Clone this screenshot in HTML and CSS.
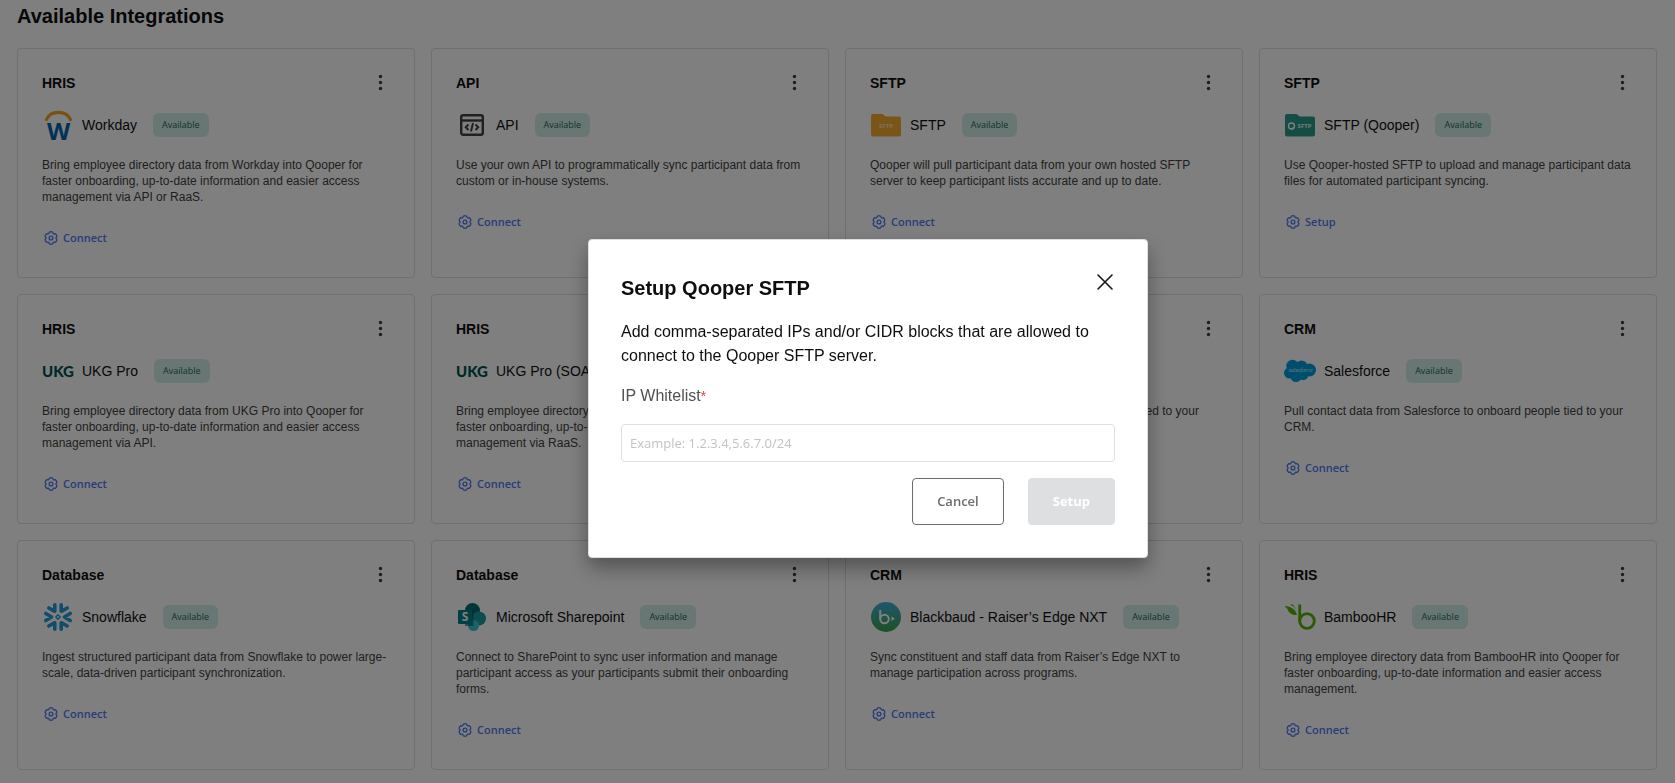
FILE: index.html
```html
<!DOCTYPE html>
<html lang="en">
<head>
<meta charset="utf-8">
<meta name="viewport" content="width=device-width, initial-scale=1">
<title>Available Integrations</title>
<link rel="stylesheet" href="styles.css">
</head>
<body>
<svg class="sprite" aria-hidden="true">
  <symbol id="gear" viewBox="0 0 14 14">
    <path d="M5.500 1Q7 .5 8.500 1L9.400 2.800 11.400 2.700Q12.600 3.700 12.900 5.300L11.800 7 12.900 8.700Q12.600 10.300 11.400 11.300L9.400 11.200 8.500 13Q7 13.500 5.500 13L4.600 11.200 2.600 11.300Q1.400 10.300 1.100 8.700L2.200 7 1.100 5.300Q1.400 3.700 2.600 2.700L4.600 2.800Z" fill="none" stroke="currentColor" stroke-width="1.300" stroke-linejoin="round"/>
    <circle cx="7" cy="7" r="1.900" fill="none" stroke="currentColor" stroke-width="1.300"/>
  </symbol>
  <symbol id="kebab" viewBox="0 0 20 20">
    <circle cx="10.500" cy="3.500" r="1.700"/><circle cx="10.500" cy="9.500" r="1.700"/><circle cx="10.500" cy="15.500" r="1.700"/>
  </symbol>
</svg>

<main class="page">
  <h1 class="page-title">Available Integrations</h1>
  <div class="grid">
    <article class="card">
      <header class="card-head"><h2 class="card-type">HRIS</h2><button class="menu" aria-label="More options"><svg><use href="#kebab"/></svg></button></header>
      <div class="card-name">
        <svg class="logo" viewBox="0 0 32 32"><path d="M4.500 10.500C8.500 1 24 1 28.500 10.500" fill="none" stroke="#f5a01e" stroke-width="3.200" stroke-linecap="round"/><text class="logo-text" x="16.500" y="31" font-size="24" text-anchor="middle" fill="#0064ab">W</text></svg>
        <span>Workday</span><span class="badge">Available</span>
      </div>
      <p class="desc">Bring employee directory data from Workday into Qooper for faster onboarding, up-to-date information and easier access management via API or RaaS.</p>
      <button class="action"><svg><use href="#gear"/></svg>Connect</button>
    </article>

    <article class="card">
      <header class="card-head"><h2 class="card-type">API</h2><button class="menu" aria-label="More options"><svg><use href="#kebab"/></svg></button></header>
      <div class="card-name">
        <svg class="logo" viewBox="0 0 32 32" fill="none" stroke="#404042" stroke-width="2.400"><rect x="5.200" y="6.200" width="21.600" height="19.600" rx="2"/><path d="M5 11.500H27"/><path d="M12.500 15.500 9.800 18.300 12.500 21M19.500 15.500 22.200 18.300 19.500 21M17 14 15 22.500" stroke-width="2"/></svg>
        <span>API</span><span class="badge">Available</span>
      </div>
      <p class="desc">Use your own API to programmatically sync participant data from custom or in-house systems.</p>
      <button class="action"><svg><use href="#gear"/></svg>Connect</button>
    </article>

    <article class="card">
      <header class="card-head"><h2 class="card-type">SFTP</h2><button class="menu" aria-label="More options"><svg><use href="#kebab"/></svg></button></header>
      <div class="card-name">
        <svg class="logo" viewBox="0 0 32 32"><path d="M1 7Q1 5 3 5H12Q13.500 5 14.500 6.500L15.500 7.500H29Q31 7.500 31 9.500V25.500Q31 27.500 29 27.500H3Q1 27.500 1 25.500Z" fill="#f2aa30"/><text class="logo-text" x="16" y="19" font-size="6" text-anchor="middle" fill="#fbe6bf">SFTP</text></svg>
        <span>SFTP</span><span class="badge">Available</span>
      </div>
      <p class="desc">Qooper will pull participant data from your own hosted SFTP server to keep participant lists accurate and up to date.</p>
      <button class="action"><svg><use href="#gear"/></svg>Connect</button>
    </article>

    <article class="card">
      <header class="card-head"><h2 class="card-type">SFTP</h2><button class="menu" aria-label="More options"><svg><use href="#kebab"/></svg></button></header>
      <div class="card-name">
        <svg class="logo" viewBox="0 0 32 32"><path d="M1 7Q1 5 3 5H12Q13.500 5 14.500 6.500L15.500 7.500H29Q31 7.500 31 9.500V25.500Q31 27.500 29 27.500H3Q1 27.500 1 25.500Z" fill="#269a86"/><circle cx="7.500" cy="17" r="3" fill="none" stroke="#fff" stroke-width="1.400"/><path d="M7.500 20.500 9.500 18.500" stroke="#fff" stroke-width="1.400"/><text class="logo-text" x="20.500" y="19" font-size="6" text-anchor="middle" fill="#e6f5f2">SFTP</text></svg>
        <span>SFTP (Qooper)</span><span class="badge">Available</span>
      </div>
      <p class="desc">Use Qooper-hosted SFTP to upload and manage participant data files for automated participant syncing.</p>
      <button class="action"><svg><use href="#gear"/></svg>Setup</button>
    </article>

    <article class="card">
      <header class="card-head"><h2 class="card-type">HRIS</h2><button class="menu" aria-label="More options"><svg><use href="#kebab"/></svg></button></header>
      <div class="card-name">
        <svg class="logo" viewBox="0 0 32 32"><text class="ukg-mark" x="0" y="22" font-size="15">UKG</text></svg>
        <span>UKG Pro</span><span class="badge">Available</span>
      </div>
      <p class="desc">Bring employee directory data from UKG Pro into Qooper for faster onboarding, up-to-date information and easier access management via API.</p>
      <button class="action"><svg><use href="#gear"/></svg>Connect</button>
    </article>

    <article class="card">
      <header class="card-head"><h2 class="card-type">HRIS</h2><button class="menu" aria-label="More options"><svg><use href="#kebab"/></svg></button></header>
      <div class="card-name">
        <svg class="logo" viewBox="0 0 32 32"><text class="ukg-mark" x="0" y="22" font-size="15">UKG</text></svg>
        <span>UKG Pro (SOAP)</span><span class="badge">Available</span>
      </div>
      <p class="desc">Bring employee directory data from UKG Pro into Qooper for faster onboarding, up-to-date information and easier access management via RaaS.</p>
      <button class="action"><svg><use href="#gear"/></svg>Connect</button>
    </article>

    <article class="card">
      <header class="card-head"><h2 class="card-type">CRM</h2><button class="menu" aria-label="More options"><svg><use href="#kebab"/></svg></button></header>
      <div class="card-name">
        <svg class="logo" viewBox="0 0 32 32" fill="none" stroke="#ff7a59" stroke-width="3"><circle cx="19" cy="20" r="6"/><path d="M19 14V5M15 16 6 8"/></svg>
        <span>HubSpot</span><span class="badge">Available</span>
      </div>
      <p class="desc">Pull contact data from HubSpot to onboard people tied to your CRM.</p>
      <button class="action"><svg><use href="#gear"/></svg>Connect</button>
    </article>

    <article class="card">
      <header class="card-head"><h2 class="card-type">CRM</h2><button class="menu" aria-label="More options"><svg><use href="#kebab"/></svg></button></header>
      <div class="card-name">
        <svg class="logo" viewBox="0 0 32 32" fill="#009cdb"><circle cx="8.500" cy="11" r="6.200"/><circle cx="17.500" cy="11.500" r="6"/><circle cx="25.500" cy="15" r="6.500"/><circle cx="5.500" cy="18" r="5.500"/><circle cx="12" cy="21.500" r="5.500"/><circle cx="19" cy="19.500" r="5.500"/><text class="logo-script" x="16.500" y="17" font-size="6" text-anchor="middle" fill="#d6eef8">salesforce</text></svg>
        <span>Salesforce</span><span class="badge">Available</span>
      </div>
      <p class="desc">Pull contact data from Salesforce to onboard people tied to your CRM.</p>
      <button class="action"><svg><use href="#gear"/></svg>Connect</button>
    </article>

    <article class="card">
      <header class="card-head"><h2 class="card-type">Database</h2><button class="menu" aria-label="More options"><svg><use href="#kebab"/></svg></button></header>
      <div class="card-name">
        <svg class="logo" viewBox="0 0 32 32" fill="none" stroke="#2599d4" stroke-width="3.600" stroke-linecap="round" stroke-linejoin="round"><path d="M3.800 12.500 9.500 16 3.800 19.500M28.200 12.500 22.500 16 28.200 19.500M12.800 3.800V10.300L6.800 7M19.200 3.800V10.300L25.200 7M12.800 28.200V21.700L6.800 25M19.200 28.200V21.700L25.200 25"/><path d="M16 13.800 18.200 16 16 18.200 13.800 16Z" stroke-width="1.500"/></svg>
        <span>Snowflake</span><span class="badge">Available</span>
      </div>
      <p class="desc">Ingest structured participant data from Snowflake to power large-scale, data-driven participant synchronization.</p>
      <button class="action"><svg><use href="#gear"/></svg>Connect</button>
    </article>

    <article class="card">
      <header class="card-head"><h2 class="card-type">Database</h2><button class="menu" aria-label="More options"><svg><use href="#kebab"/></svg></button></header>
      <div class="card-name">
        <svg class="logo" viewBox="0 0 32 32"><circle cx="16.500" cy="9.500" r="7.500" fill="#036c70"/><circle cx="23" cy="17.500" r="7" fill="#1a9ba1"/><circle cx="17.500" cy="24.500" r="5.500" fill="#37c6d0"/><path d="M9 9H17.500V25H9Z" fill="#025457" opacity=".6"/><rect x="2" y="9" width="14" height="14" rx="1" fill="#038387"/><text class="logo-text" x="9" y="20" font-size="12" text-anchor="middle" fill="#fff">S</text></svg>
        <span>Microsoft Sharepoint</span><span class="badge">Available</span>
      </div>
      <p class="desc">Connect to SharePoint to sync user information and manage participant access as your participants submit their onboarding forms.</p>
      <button class="action"><svg><use href="#gear"/></svg>Connect</button>
    </article>

    <article class="card">
      <header class="card-head"><h2 class="card-type">CRM</h2><button class="menu" aria-label="More options"><svg><use href="#kebab"/></svg></button></header>
      <div class="card-name">
        <svg class="logo" viewBox="0 0 32 32"><defs><linearGradient id="sky" x1="0" y1="0" x2="0" y2="1"><stop offset="0" stop-color="#3db0dc"/><stop offset="1" stop-color="#3aa048"/></linearGradient></defs><circle cx="16" cy="16" r="15" fill="url(#sky)"/><g fill="none" stroke="#fff" stroke-width="2"><circle cx="14.500" cy="18" r="4.300"/><path d="M10.200 9V18"/></g><path d="M21.500 15.500 25 17.700 21.500 20Z" fill="#fff"/></svg>
        <span>Blackbaud - Raiser’s Edge NXT</span><span class="badge">Available</span>
      </div>
      <p class="desc">Sync constituent and staff data from Raiser’s Edge NXT to manage participation across programs.</p>
      <button class="action"><svg><use href="#gear"/></svg>Connect</button>
    </article>

    <article class="card">
      <header class="card-head"><h2 class="card-type">HRIS</h2><button class="menu" aria-label="More options"><svg><use href="#kebab"/></svg></button></header>
      <div class="card-name">
        <svg class="logo" viewBox="0 0 32 32"><g fill="none" stroke="#57b00c" stroke-width="2.800"><circle cx="23" cy="20" r="7.300"/><path d="M15.700 3.500V20"/></g><path d="M.500 5C7 5.500 12 8 13 14C7 14.500 4.500 11 3.500 8ZM6.500 4C11 5.500 13 9 13.500 13.500C13 9 11 5.500 8 3Z" fill="#57b00c"/></svg>
        <span>BambooHR</span><span class="badge">Available</span>
      </div>
      <p class="desc">Bring employee directory data from BambooHR into Qooper for faster onboarding, up-to-date information and easier access management.</p>
      <button class="action"><svg><use href="#gear"/></svg>Connect</button>
    </article>
  </div>
</main>

<div class="overlay">
  <form class="modal" role="dialog" aria-modal="true" aria-labelledby="modal-title">
    <header class="modal-head">
      <h2 class="modal-title" id="modal-title">Setup Qooper SFTP</h2>
      <button class="close" type="button" aria-label="Close"><svg viewBox="0 0 20 20"><path d="M3 3 17 17M17 3 3 17"/></svg></button>
    </header>
    <p class="modal-text">Add comma-separated IPs and/or CIDR blocks that are allowed to connect to the Qooper SFTP server.</p>
    <label class="label" for="ips">IP Whitelist<span class="required">*</span></label>
    <input class="input" id="ips" type="text" placeholder="Example: 1.2.3.4,5.6.7.0/24">
    <div class="buttons">
      <button class="btn btn-outline" type="button">Cancel</button>
      <button class="btn btn-solid" type="submit" disabled>Setup</button>
    </div>
  </form>
</div>
</body>
</html>
```

FILE: styles.css
```css
* { box-sizing: border-box; }

body {
  margin: 0;
  background: #fff;
  color: #0e0e10;
  font-family: "Liberation Sans", Arial, sans-serif;
}

h1, h2, p { margin: 0; }

button {
  border: 0;
  background: none;
  padding: 0;
  font-family: "Open Sans", "Noto Sans", sans-serif;
  cursor: pointer;
}

.sprite { position: absolute; width: 0; height: 0; }

.page { padding: 4px 18px 12px 17px; }

.page-title {
  margin-bottom: 20px;
  font-size: 20px;
  line-height: 24px;
}

.grid {
  display: grid;
  grid-template-columns: repeat(4, minmax(0, 1fr));
  gap: 16px;
}

.card {
  min-height: 230px;
  padding: 24px;
  border: 1px solid #dedfe1;
  border-radius: 4px;
}

.card-head {
  display: flex;
  align-items: center;
  justify-content: space-between;
  height: 20px;
}

.card-type { font-size: 14px; line-height: 20px; }

.menu, .menu svg {
  display: block;
  width: 20px;
  height: 20px;
  fill: #3c3c3e;
}

.card-name {
  display: flex;
  align-items: center;
  margin: 16px 0;
  font-size: 14px;
  line-height: 20px;
}

.logo {
  width: 32px;
  height: 32px;
  margin-right: 8px;
  overflow: visible;
}

.logo-text { font-family: "Open Sans", sans-serif; font-weight: 700; }
.logo-script { font-family: "Liberation Serif", serif; font-style: italic; }
.ukg-mark { font-family: Lato, sans-serif; font-weight: 900; fill: #005151; }

.badge {
  margin-left: 16px;
  padding: 0 9px;
  border-radius: 6px;
  background: #d3efe8;
  color: #1a6656;
  font-family: "Open Sans", "Noto Sans", sans-serif;
  font-size: 9px;
  line-height: 24px;
}

.desc {
  color: #3e3e40;
  font-size: 12px;
  line-height: 16px;
}

.action {
  display: flex;
  align-items: center;
  gap: 5px;
  margin: 24px 0 0 2px;
  color: #4f79f0;
  font-size: 11px;
  font-weight: 600;
  line-height: 17px;
}

.action svg { width: 14px; height: 14px; }

.overlay {
  position: fixed;
  inset: 0;
  display: flex;
  align-items: center;
  justify-content: center;
  padding: 13px 0 0 61px;
  background: rgba(0, 0, 0, .5);
}

.modal {
  display: flex;
  flex-direction: column;
  gap: 16px;
  width: 560px;
  max-width: 100%;
  padding: 32px;
  border: 1px solid #dedfe1;
  border-radius: 4px;
  background: #fff;
  box-shadow: 0 10px 20px rgba(0, 0, 0, .35);
}

.modal-head {
  display: flex;
  align-items: flex-start;
  justify-content: space-between;
}

.modal-title { font-size: 20px; line-height: 32px; }

.close, .close svg {
  display: block;
  width: 20px;
  height: 20px;
}

.close svg { fill: none; stroke: #161618; stroke-width: 1.6; stroke-linecap: round; }

.modal-text, .label { font-size: 16px; line-height: 24px; }

.label { color: #515154; }

.required { color: #f03c3c; font-size: 14px; }

.input {
  width: 100%;
  height: 38px;
  padding: 0 8px;
  border: 1px solid #dedfe1;
  border-radius: 4px;
  font-family: "Open Sans", "Noto Sans", sans-serif;
  font-size: 13px;
}

.input::placeholder { color: #c2c3c7; }

.buttons {
  display: flex;
  justify-content: flex-end;
  gap: 24px;
}

.btn {
  height: 47px;
  border: 1px solid #dedfe1;
  border-radius: 4px;
  padding: 0 24px;
  font-size: 13px;
  font-weight: 600;
}

.btn-outline { border-color: #6b6c70; color: #6b6c70; }
.btn-solid { background: #dedfe1; color: #fff; font-weight: 700; }
```
